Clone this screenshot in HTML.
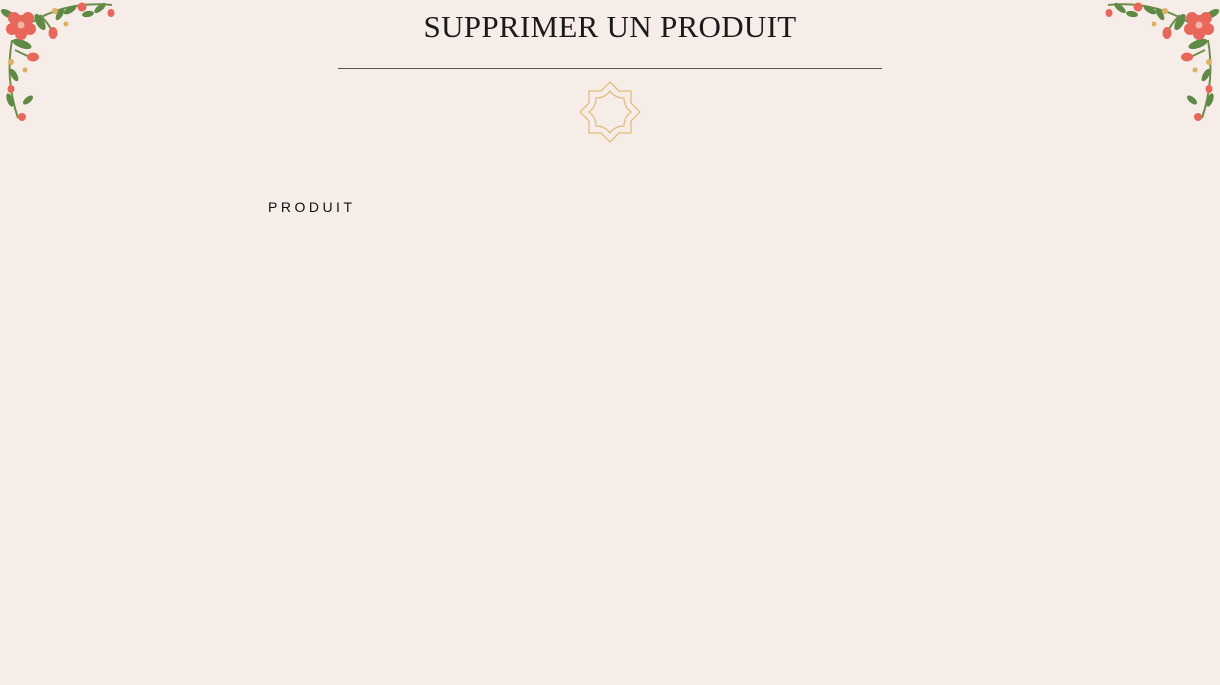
<!DOCTYPE html>
<html><head><meta charset="utf-8"><style>
html,body{margin:0;padding:0;width:1220px;height:685px;background:#f6ece8;overflow:hidden;position:relative}
.t{position:absolute;left:0;width:1220px;top:9px;text-align:center;font-family:"Liberation Serif",serif;font-size:31px;color:#1a1a1a;letter-spacing:0.3px}
.ln{position:absolute;left:338px;top:68px;width:544px;height:1px;background:#555}
.p{position:absolute;left:268px;top:199px;font-family:"Liberation Sans",sans-serif;font-size:14px;letter-spacing:3.5px;color:#111}
svg{position:absolute}
</style></head><body>
<div class="t">SUPPRIMER UN PRODUIT</div>
<div class="ln"></div>
<svg style="left:578px;top:80px" width="64" height="64" viewBox="-32 -32 64 64">
<g fill="none" stroke="#e0bf7e" stroke-width="1.3">
<path d="M0,-30 L9,-21 L21,-21 L21,-9 L30,0 L21,9 L21,21 L9,21 L0,30 L-9,21 L-21,21 L-21,9 L-30,0 L-21,-9 L-21,-21 L-9,-21 Z"/>
<path d="M0,-21 Q5,-14 14,-14 Q14,-5 21,0 Q14,5 14,14 Q5,14 0,21 Q-5,14 -14,14 Q-14,5 -21,0 Q-14,-5 -14,-14 Q-5,-14 0,-21 Z"/>
</g></svg>
<div class="p">PRODUIT</div>
<svg id="fl" style="left:0;top:0" width="120" height="125" viewBox="0 0 120 125">
<g fill="none" stroke="#6b8f4a" stroke-width="2">
<path d="M20,30 Q60,0 112,5"/>
<path d="M12,40 Q5,80 18,118"/>
<path d="M40,15 Q50,25 52,32"/>
<path d="M15,50 Q25,55 32,58"/>
</g>
<g fill="#5f8a45">
<ellipse cx="70" cy="10" rx="7" ry="3" transform="rotate(-30 70 10)"/>
<ellipse cx="100" cy="8" rx="7" ry="3" transform="rotate(-40 100 8)"/>
<ellipse cx="8" cy="14" rx="8" ry="3.5" transform="rotate(30 8 14)"/>
<ellipse cx="14" cy="75" rx="7" ry="3" transform="rotate(60 14 75)"/>
<ellipse cx="10" cy="100" rx="7" ry="3" transform="rotate(70 10 100)"/>
<ellipse cx="22" cy="44" rx="10" ry="4" transform="rotate(20 22 44)"/>
<ellipse cx="40" cy="22" rx="9" ry="4" transform="rotate(60 40 22)"/>
<ellipse cx="60" cy="14" rx="7" ry="3" transform="rotate(-60 60 14)"/>
<ellipse cx="28" cy="100" rx="6" ry="3" transform="rotate(-40 28 100)"/>
<ellipse cx="88" cy="14" rx="6" ry="3" transform="rotate(-10 88 14)"/>
</g>
<g fill="#e8675a">
<circle cx="21" cy="24" r="9"/><circle cx="14" cy="18" r="6"/><circle cx="28" cy="18" r="6"/><circle cx="21" cy="34" r="6"/><circle cx="12" cy="29" r="6"/><circle cx="30" cy="29" r="6"/>
<ellipse cx="53" cy="33" rx="4.5" ry="6"/><ellipse cx="82" cy="7" rx="4.5" ry="4.5"/><ellipse cx="111" cy="13" rx="3.5" ry="4"/>
<ellipse cx="33" cy="57" rx="6" ry="4.5"/><ellipse cx="11" cy="89" rx="3.5" ry="4"/><ellipse cx="22" cy="117" rx="4" ry="4"/>
</g>
<circle cx="21" cy="25" r="3.5" fill="#f3b5a5"/>
<g fill="#e0b060"><circle cx="55" cy="11" r="3"/><circle cx="66" cy="24" r="2.5"/><circle cx="11" cy="62" r="3"/><circle cx="25" cy="70" r="2.5"/></g>
</svg>
<svg style="left:1100px;top:0;transform:scaleX(-1)" width="120" height="125" viewBox="0 0 120 125"><use href="#fl"/></svg>
</body></html>
